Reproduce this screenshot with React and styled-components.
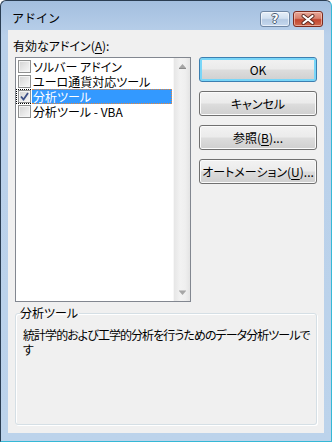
import React from 'react';
import styled, { createGlobalStyle } from 'styled-components';

const Global = createGlobalStyle`
  html, body { margin: 0; padding: 0; background: #ffffff; }
  body {
    font-family: "Noto Sans CJK JP", "Noto Sans", sans-serif;
    font-size: 12px;
    color: #000;
  }
  * { box-sizing: border-box; }
`;

const Window = styled.div`
  width: 332px;
  height: 442px;
  border: 1px solid;
  border-color: #2a3d52 #35b8d6 #35b8d6 #2a3d52;
  border-radius: 6px 6px 0 0;
  background: linear-gradient(to bottom, #a3bfdf 0px, #b9d0ea 34px, #bcd3eb 100%);
  display: flex;
  flex-direction: column;
  padding: 0 7px 8px 7px;
  overflow: hidden;
`;

const TitleBar = styled.div`
  height: 29px;
  display: flex;
  align-items: flex-start;
  margin: 0 -7px;
  padding: 0 8px 0 11px;
`;

const Title = styled.div`
  margin-top: 9px;
  line-height: 16px;
  font-size: 12px;
  color: #000;
  flex: 1;
`;

const CaptionButtons = styled.div`
  margin-top: 10px;
  display: flex;
  gap: 3px;
`;

const CaptionButton = styled.div`
  width: 30px;
  height: 16px;
  border-radius: 3px;
  display: flex;
  align-items: center;
  justify-content: center;
  border: 1px solid ${p => (p.$close ? '#7c2b1f' : '#6f86a3')};
  background: ${p =>
    p.$close
      ? 'linear-gradient(to bottom, #e7a697 0%, #d8826f 45%, #c3462f 55%, #cf6a4f 100%)'
      : 'linear-gradient(to bottom, #e6eff9 0%, #d2e0f0 45%, #b5cae3 55%, #c6d8ee 100%)'};
  box-shadow: inset 0 0 0 1px ${p => (p.$close ? 'rgba(255,220,210,0.55)' : 'rgba(255,255,255,0.6)')};
`;

const HelpGlyph = styled.span`
  font-family: "DejaVu Sans", sans-serif;
  font-weight: bold;
  font-size: 12px;
  line-height: 12px;
  color: #fff;
  text-shadow: 1px 0 #4a5b72, -1px 0 #4a5b72, 0 1px #4a5b72, 0 -1px #4a5b72;
`;

const Content = styled.div`
  flex: 1;
  background: #f0f0f0;
  padding: 8px 7px 8px 7px;
  display: flex;
  flex-direction: column;
  font-feature-settings: "palt";
`;

const FieldLabel = styled.div`
  height: 16px;
  line-height: 16px;
  margin-bottom: 3px;
  margin-left: -2px;
`;

const Key = styled.span`
  text-decoration: underline;
  text-underline-offset: 2px;
`;

const MainRow = styled.div`
  display: flex;
  gap: 8px;
  height: 245px;
`;

const ListBox = styled.div`
  width: 176px;
  border: 1px solid #828790;
  background: #ffffff;
  display: flex;
`;

const Items = styled.div`
  flex: 1;
  padding: 1px 1px 1px 0;
  display: flex;
  flex-direction: column;
`;

const Row = styled.div`
  height: 15px;
  display: flex;
  align-items: stretch;
  white-space: nowrap;
`;

const CheckCell = styled.div`
  width: 15px;
  display: flex;
  align-items: center;
  justify-content: center;
  border: 1px dotted ${p => (p.$focus ? '#000' : 'transparent')};
  border-right: none;
`;

const Check = styled.div`
  width: 13px;
  height: 13px;
  border: 1px solid #8e8f8f;
  background: linear-gradient(135deg, #d2d2d2 0%, #e6e6e6 50%, #f8f8f8 100%);
  box-shadow: inset 0 0 0 1px #f4f4f4;
  display: flex;
  align-items: center;
  justify-content: center;
`;

const ItemText = styled.div`
  flex: 1;
  margin-left: 1px;
  padding-left: 1px;
  display: flex;
  align-items: center;
  overflow: hidden;
  font-size: 12px;
  background: ${p => (p.$selected ? '#3399ff' : 'transparent')};
  color: ${p => (p.$selected ? '#ffffff' : '#000000')};
  border: 1px dotted ${p => (p.$focus ? '#e8873a' : 'transparent')};
  border-left: none;
`;

const ScrollBar = styled.div`
  width: 17px;
  display: flex;
  flex-direction: column;
  justify-content: space-between;
  background: linear-gradient(to right, #e6e6e6 0%, #f2f2f2 40%, #efefef 70%, #e4e4e4 100%);
  border-left: 1px solid #f7f7f7;
`;

const ScrollArrow = styled.div`
  height: 17px;
  display: flex;
  align-items: center;
  justify-content: center;
`;

const ButtonColumn = styled.div`
  width: 118px;
  display: flex;
  flex-direction: column;
  gap: 9px;
`;

const Button = styled.div`
  height: 25px;
  border-radius: 3px;
  border: 1px solid ${p => (p.$default ? '#3c7fb1' : '#707070')};
  background: linear-gradient(to bottom, #f2f2f2 0%, #ebebeb 49%, #dddddd 51%, #cfcfcf 100%);
  box-shadow: inset 0 0 0 ${p => (p.$default ? '2px #79d6f8' : '1px #fbfbfb')};
  display: flex;
  align-items: center;
  justify-content: center;
  font-size: 12px;
  line-height: 16px;
  white-space: nowrap;
`;

const Group = styled.fieldset`
  margin: 3px 0 0 0;
  height: 120px;
  border: 1px solid #d5dfe5;
  border-radius: 3px;
  padding: 0 6px 0 4px;
  box-shadow: 1px 1px 0 #ffffff, inset 1px 1px 0 #ffffff;
  min-width: 0;
`;

const Legend = styled.legend`
  padding: 0 1px 0 0;
  line-height: 16px;
  font-size: 12px;
`;

const Description = styled.div`
  margin: 6px 0 0 3px;
  line-height: 15px;
  letter-spacing: -0.95px;
`;

const DescLine = styled.div`
  white-space: nowrap;
  height: 15px;
`;

const CheckMark = () => (
  <svg width="9" height="9" viewBox="0 0 9 9">
    <path d="M1 4.5 L3.5 7.5 L8 1" fill="none" stroke="#3c4f86" strokeWidth="1.8" strokeLinejoin="miter" />
  </svg>
);

const Arrow = ({ down }) => (
  <svg width="7" height="5" viewBox="0 0 7 5">
    {down ? (
      <>
        <polygon points="0,1 7,1 3.5,5" fill="#a6a6a6" />
        <rect x="0" y="0" width="7" height="1" fill="#c8c8c8" />
      </>
    ) : (
      <>
        <polygon points="0,4 7,4 3.5,0" fill="#a6a6a6" />
        <rect x="0" y="4" width="7" height="1" fill="#8c8c8c" />
      </>
    )}
  </svg>
);

const CloseIcon = () => (
  <svg width="14" height="11" viewBox="0 0 14 11">
    <path d="M2.5 2 L11.5 9 M11.5 2 L2.5 9" stroke="#5b2a22" strokeWidth="4" strokeLinecap="round" />
    <path d="M2.5 2 L11.5 9 M11.5 2 L2.5 9" stroke="#ffffff" strokeWidth="2.2" strokeLinecap="round" />
  </svg>
);

const items = [
  { label: 'ソルバー アドイン', checked: false },
  { label: 'ユーロ通貨対応ツール', checked: false },
  { label: '分析ツール', checked: true, selected: true },
  { label: '分析ツール - VBA', checked: false },
];

export default function App() {
  return (
    <>
      <Global />
      <Window>
        <TitleBar>
          <Title>アドイン</Title>
          <CaptionButtons>
            <CaptionButton><HelpGlyph>?</HelpGlyph></CaptionButton>
            <CaptionButton $close><CloseIcon /></CaptionButton>
          </CaptionButtons>
        </TitleBar>
        <Content>
          <FieldLabel>有効なアドイン(<Key>A</Key>):</FieldLabel>
          <MainRow>
            <ListBox>
              <Items>
                {items.map(it => (
                  <Row key={it.label}>
                    <CheckCell $focus={it.selected}>
                      <Check>{it.checked && <CheckMark />}</Check>
                    </CheckCell>
                    <ItemText $selected={it.selected} $focus={it.selected}>{it.label}</ItemText>
                  </Row>
                ))}
              </Items>
              <ScrollBar>
                <ScrollArrow><Arrow /></ScrollArrow>
                <ScrollArrow><Arrow down /></ScrollArrow>
              </ScrollBar>
            </ListBox>
            <ButtonColumn>
              <Button $default>OK</Button>
              <Button>キャンセル</Button>
              <Button>参照(<Key>B</Key>)...</Button>
              <Button>オートメーション(<Key>U</Key>)...</Button>
            </ButtonColumn>
          </MainRow>
          <Group>
            <Legend>分析ツール</Legend>
            <Description>
              <DescLine>統計学的および工学的分析を行うためのデータ分析ツールで</DescLine>
              <DescLine>す</DescLine>
            </Description>
          </Group>
        </Content>
      </Window>
    </>
  );
}
